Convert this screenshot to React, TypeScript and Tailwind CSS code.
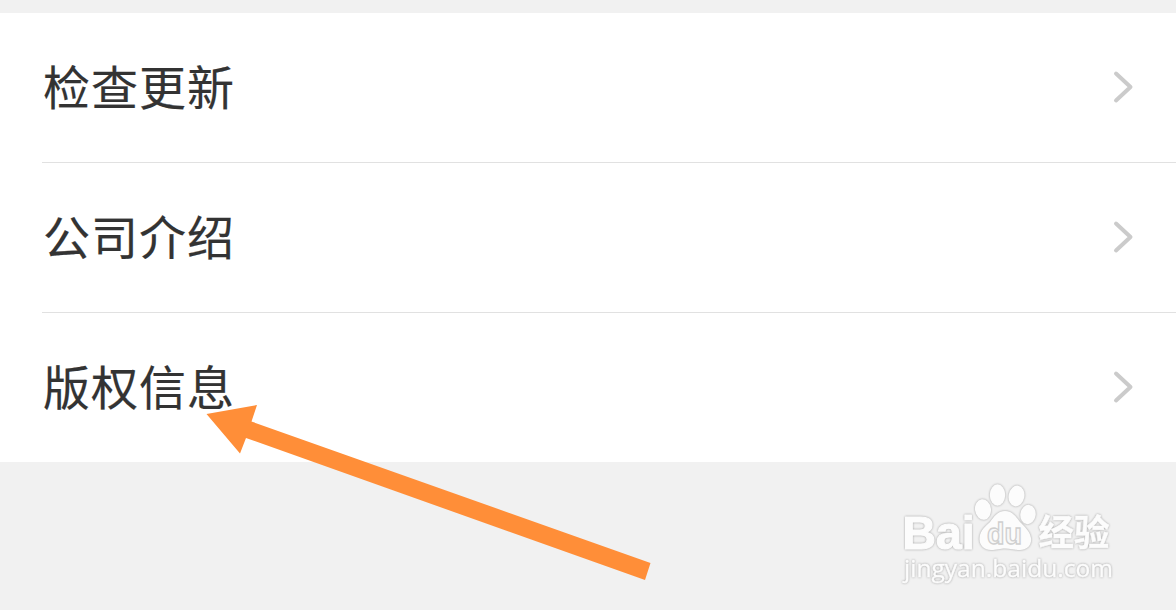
const items = ["检查更新", "公司介绍", "版权信息"];

function Chevron() {
  return (
    <svg className="-mt-0.5" width="24" height="36" viewBox="0 0 24 36" fill="none" stroke="#cbcbcb" strokeWidth="4" strokeLinecap="round" strokeLinejoin="round">
      <path d="M4 4.500L18.500 18L4 31.500" />
    </svg>
  );
}

function Arrow() {
  return (
    <svg className="absolute left-[200px] top-[400px]" width="460" height="190" viewBox="200 400 460 190">
      <polygon points="206.5,414 257,405 251.5,421.5 650.5,563 645,580 246,438 240,453.5" fill="#ff8e38" />
    </svg>
  );
}

function Watermark() {
  return (
    <svg className="absolute left-[890px] top-[475px]" width="240" height="120" viewBox="0 0 240 120">
      <g fill="#fcfcfc" strokeLinejoin="round" className="drop-shadow-[0_0_1px_#a0a0a0]">
        <text x="12.500" y="73.500" textLength="72" lengthAdjust="spacingAndGlyphs" fontSize="47" fontWeight="700" stroke="#fcfcfc" strokeWidth="1.200" className="font-['Liberation_Sans',sans-serif]">Bai</text>
        <ellipse cx="93" cy="34.500" rx="8" ry="10.300" transform="rotate(-8 93 34.500)" />
        <ellipse cx="107.500" cy="20" rx="7.700" ry="10.700" />
        <ellipse cx="126.500" cy="21" rx="7.900" ry="10.500" transform="rotate(10 126.500 21)" />
        <ellipse cx="138" cy="39.500" rx="7.700" ry="9.700" transform="rotate(8 138 39.500)" />
        <path d="M115 36C107 36 104 42 100 47C96 51 90 55 89.500 63C89 70 94 75 101 75C107 75 110 73.500 115 73.500C120 73.500 124 75 130 75C137 75 142 70 141 63C140 56 134 51 130 47C126 42 123 36 115 36Z" />
        <text x="148.500" y="70.500" textLength="71" lengthAdjust="spacingAndGlyphs" fontSize="36" fontWeight="700" stroke="#fcfcfc" strokeWidth="0.500" className="font-['Noto_Sans_CJK_SC',sans-serif]">经验</text>
        <text x="14" y="102" textLength="209" lengthAdjust="spacingAndGlyphs" fontSize="24" stroke="#fcfcfc" strokeWidth="0.400" className="font-['Open_Sans',sans-serif]">jingyan.baidu.com</text>
      </g>
      <text x="97" y="69" textLength="35" lengthAdjust="spacingAndGlyphs" fontSize="29" fontWeight="700" fill="#f8f8f8" stroke="#cfcfcf" strokeWidth="1.300" className="font-['Liberation_Sans',sans-serif]">du</text>
    </svg>
  );
}

export default function App() {
  return (
    <div className="relative h-[610px] w-full overflow-hidden bg-[#f1f1f1] pt-[13px] font-['Noto_Sans_CJK_SC',sans-serif]">
      <ul className="h-[449px] bg-white pl-[42px]">
        {items.map((label) => (
          <li key={label} className="flex h-[150px] items-center justify-between border-b border-[#e1e1e1] pr-10 last:h-[149px] last:border-b-0">
            <span className="-mt-1.5 pl-px text-[47px] leading-none tracking-[1px] text-[#333333] [-webkit-text-stroke:0.2px_#333333]">{label}</span>
            <Chevron />
          </li>
        ))}
      </ul>
      <Arrow />
      <Watermark />
    </div>
  );
}
